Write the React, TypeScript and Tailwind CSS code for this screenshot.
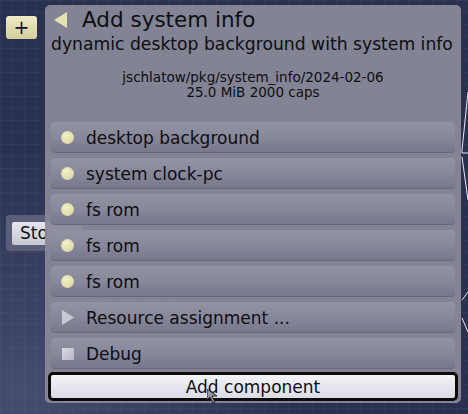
import React from "react";

function Row({ children, icon }: { children: React.ReactNode; icon: React.ReactNode }) {
  return (
    <div className="flex h-[31px] items-center rounded-[4px] bg-gradient-to-b from-[#9292a4] via-[#88889c] to-[#76768c] shadow-[inset_0_-1px_0_rgba(0,0,0,0.12)]">
      <div className="ml-[10px] flex h-[13px] w-[13px] items-center justify-center">{icon}</div>
      <span className="ml-[12px] text-[17px] leading-[20px] text-[#0e0e0e]">{children}</span>
    </div>
  );
}

const Bullet = () => (
  <div className="h-[13px] w-[13px] rounded-full bg-[radial-gradient(circle_at_40%_35%,#f2efc8,#d6d29a)]" />
);

export default function App() {
  return (
    <div className="relative h-[414px] w-[468px] overflow-hidden bg-[#293050] font-['DejaVu_Sans',sans-serif]">
      {/* canvas grid and clouds */}
      <div className="absolute inset-0 bg-[linear-gradient(rgba(255,255,255,0.035)_1px,transparent_1px),linear-gradient(90deg,rgba(255,255,255,0.035)_1px,transparent_1px)] bg-[size:12px_12px]" />
      <div className="absolute inset-0 bg-[radial-gradient(ellipse_at_5%_95%,rgba(120,130,170,0.35),transparent_45%)]" />

      {/* graph lines on the right */}
      <svg className="absolute left-0 top-0" width="468" height="414">
        <polyline points="468,92 462,150 462,153 468,153" fill="none" stroke="#e8e8f0" strokeWidth="1" />
        <polyline points="462,157 468,200" fill="none" stroke="#e8e8f0" strokeWidth="1" />
        <polyline points="462,300 468,292" fill="none" stroke="#e8e8f0" strokeWidth="1" />
        <polyline points="462,318 468,332" fill="none" stroke="#e8e8f0" strokeWidth="1" />
      </svg>

      {/* + button */}
      <div className="absolute left-[6px] top-[16px] flex h-[23px] w-[31px] items-center justify-center rounded-[3px] bg-gradient-to-b from-[#f0ecc6] to-[#d2ce9c] text-[19px] leading-none text-[#111]">
        +
      </div>

      {/* Sto button behind */}
      <div className="absolute left-[6px] top-[215px] h-[36px] w-[80px] rounded-[3px] bg-[#5b5e78]">
        <div className="ml-[6px] mt-[7px] flex h-[23px] w-[70px] items-center rounded-[2px] bg-gradient-to-b from-[#e6e6ee] to-[#c8c8d4] pl-[8px] text-[17px] text-[#111]">
          Sto
        </div>
      </div>

      {/* panel */}
      <div className="absolute left-[45px] top-[5px] flex h-[398px] w-[416px] flex-col rounded-[5px] bg-[#888899]/[0.94] px-[6px] pt-[3px]">
        <div className="flex h-[24px] items-center">
          <svg width="14" height="16" viewBox="0 0 14 16" className="ml-[3px]">
            <polygon points="13,0 13,16 0,8" fill="#e6e2b4" />
          </svg>
          <span className="ml-[14px] text-[21.5px] leading-[24px] text-[#0e0e0e]">Add system info</span>
        </div>
        <div className="mt-[2px] text-[17.2px] leading-[20px] text-[#0e0e0e]">dynamic desktop background with system info</div>
        <div className="mt-[16px] text-center text-[13.5px] leading-[15px] text-[#0e0e0e]">
          <div>jschlatow/pkg/system_info/2024-02-06</div>
          <div>25.0 MiB 2000 caps</div>
        </div>
        <div className="mt-[22px] flex flex-col gap-[5px]">
          <Row icon={<Bullet />}>desktop background</Row>
          <Row icon={<Bullet />}>system clock-pc</Row>
          <Row icon={<Bullet />}>fs rom</Row>
          <Row icon={<Bullet />}>fs rom</Row>
          <Row icon={<Bullet />}>fs rom</Row>
          <Row
            icon={
              <svg width="12" height="15" viewBox="0 0 12 15">
                <polygon points="0,0 12,7.5 0,15" fill="#c9c9d6" />
              </svg>
            }
          >
            Resource assignment ...
          </Row>
          <Row icon={<div className="h-[12px] w-[12px] bg-gradient-to-br from-[#dcdce6] to-[#b4b4c4]" />}>Debug</Row>
        </div>
        <div className="mx-[-3px] mt-[3px] flex h-[29px] items-center justify-center rounded-[5px] border-[3px] border-[#0c0c0c] bg-gradient-to-b from-[#f2f2f8] to-[#dcdce6] text-[17px] leading-[20px] text-[#0e0e0e]">
          Add component
        </div>
      </div>

      {/* mouse cursor */}
      <svg className="absolute left-[207px] top-[389px]" width="16" height="16" viewBox="0 0 16 16">
        <polygon points="0,0 0,11 3,8 6,14 8,13 5,7 10,7" fill="#9a9aa6" stroke="#222" strokeWidth="1" />
      </svg>
    </div>
  );
}
